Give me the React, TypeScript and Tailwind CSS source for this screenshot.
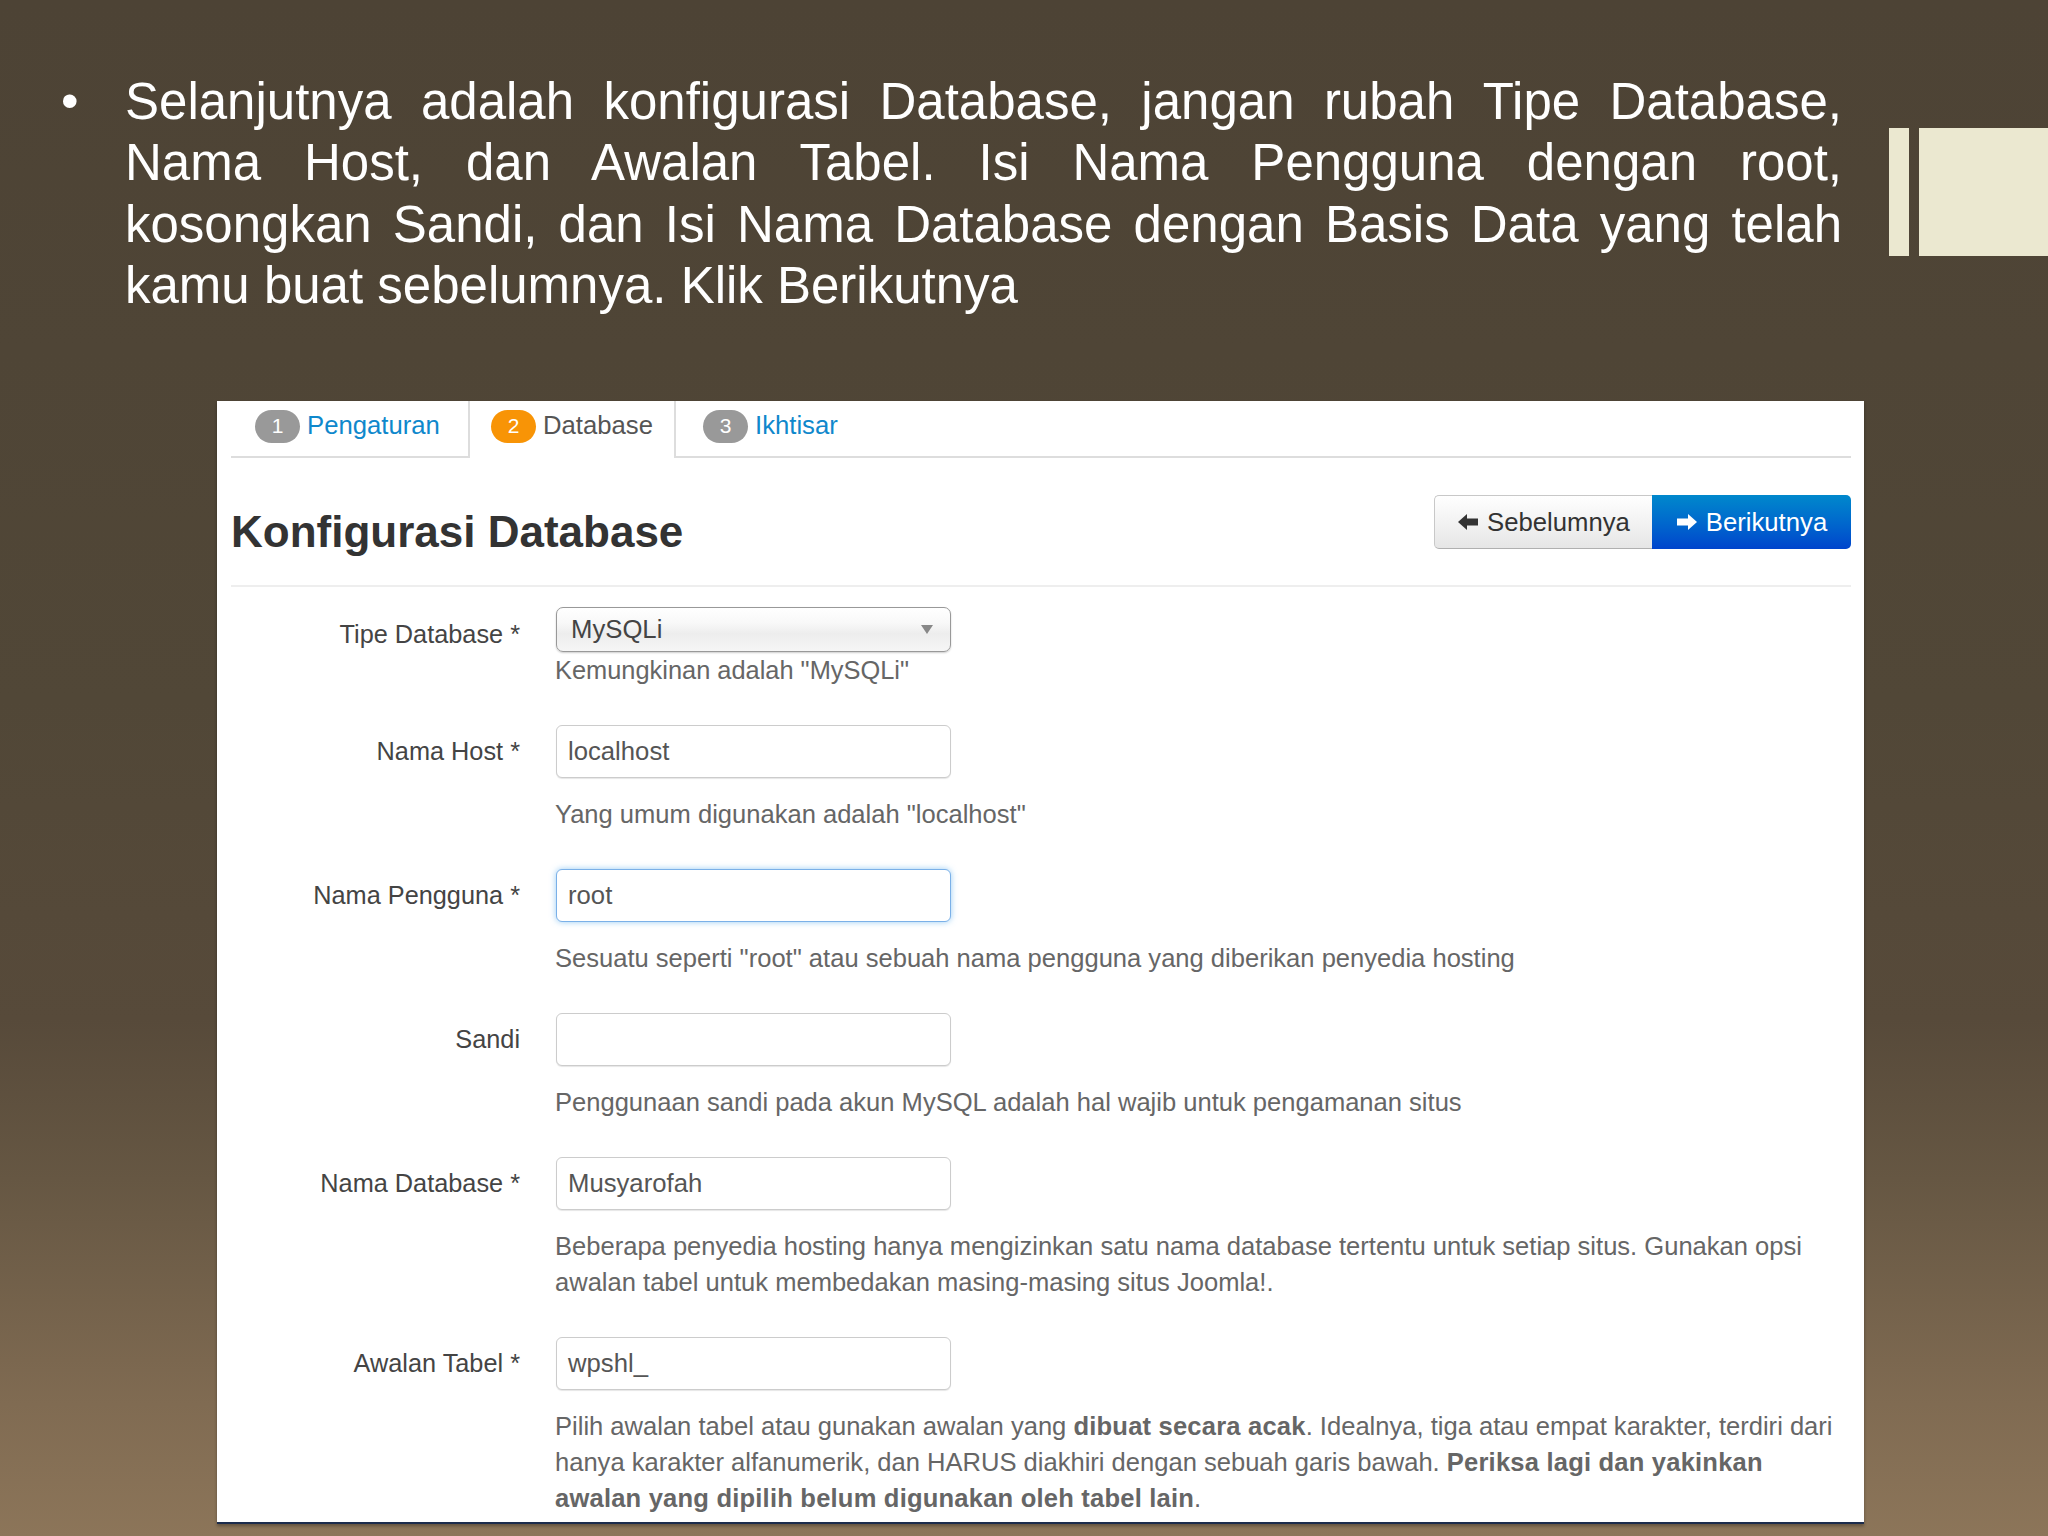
const Left = () => (
  <svg viewBox="0 0 20 16" className="w-[22px] h-[16px] mr-[8px] fill-[#333]"><path d="M0 8 L9 0 V4.5 H20 V11.5 H9 V16 Z" /></svg>
);
const Right = () => (
  <svg viewBox="0 0 20 16" className="w-[22px] h-[16px] mr-[8px] fill-white"><path d="M20 8 L11 0 V4.5 H0 V11.5 H11 V16 Z" /></svg>
);

function Badge({ n, orange }: { n: number; orange?: boolean }) {
  return (
    <span className={`w-[45px] h-[33px] rounded-full flex items-center justify-center text-white text-[21px] mr-[7px] ${orange ? "bg-[#f89406]" : "bg-[#999999]"}`}>
      {n}
    </span>
  );
}

function Field({ label, value, focus, help }: { label: string; value: string; focus?: boolean; help: React.ReactNode }) {
  return (
    <div className="flex mb-[37px]">
      <div className="w-[289px] pt-[11px] text-right text-[25.3px] text-[#444] leading-[30px] shrink-0">{label}</div>
      <div className="ml-[36px] flex-1">
        <div className={`w-[395px] h-[53px] rounded-[6px] border bg-white px-[11px] flex items-center text-[#555] ${focus ? "border-[#7ab0e8] shadow-[0_0_6px_rgba(82,168,236,0.6)]" : "border-[#cccccc] shadow-[0_1px_1px_rgba(0,0,0,0.1)]"}`}>
          {value}
        </div>
        <div className="mt-[18px] -ml-px leading-[36px] text-[25.55px] text-[#666]">{help}</div>
      </div>
    </div>
  );
}

export default function App() {
  return (
    <div
      className="w-[2048px] h-[1536px] overflow-hidden flex flex-col bg-[linear-gradient(180deg,#4d4335_0%,#514737_45.6%,#574a3a_66.4%,#665743_76.8%,#806b52_91.4%,#8c7559_100%)]"
      style={{ fontFamily: '"Liberation Sans", Arial, sans-serif' }}
    >
      <div className="flex items-start pl-[61px] pt-[71px] h-[401px] shrink-0">
        <div className="w-[64px] text-white text-[50px] leading-[61.4px]">•</div>
        <div className="w-[1717px] text-white text-[51px] leading-[61.4px]">
          <div className="[text-align:justify] [text-align-last:justify]">Selanjutnya adalah konfigurasi Database, jangan rubah Tipe Database,</div>
          <div className="[text-align:justify] [text-align-last:justify]">Nama Host, dan Awalan Tabel. Isi Nama Pengguna dengan root,</div>
          <div className="[text-align:justify] [text-align-last:justify]">kosongkan Sandi, dan Isi Nama Database dengan Basis Data yang telah</div>
          <div>kamu buat sebelumnya. Klik Berikutnya</div>
        </div>
        <div className="flex ml-[47px] mt-[57px]">
          <div className="w-[20px] h-[128px] bg-[#ebe8d0]" />
          <div className="w-[129px] h-[128px] ml-[10px] bg-[#ebe8d0]" />
        </div>
      </div>

      <div className="ml-[217px] w-[1647px] h-[1123px] shrink-0 bg-white border-b-2 border-[#1c2c4c] px-[14px] text-[25.7px] overflow-hidden shadow-[0_2px_3px_rgba(0,0,0,0.3)]">
        <div className="w-[1620px] flex h-[57px] border-b-2 border-[#dddddd]">
          <div className="w-[237px] pl-[24px] h-[50px] flex items-center">
            <Badge n={1} />
            <span className="text-[#0f88cc] -mt-[2px]">Pengaturan</span>
          </div>
          <div className="w-[208px] h-[57px] pl-[21px] pb-[7px] flex items-center bg-white border-x-2 border-[#dddddd]">
            <Badge n={2} orange />
            <span className="text-[#555] -mt-[2px]">Database</span>
          </div>
          <div className="pl-[27px] h-[50px] flex items-center">
            <Badge n={3} />
            <span className="text-[#0f88cc] -mt-[2px]">Ikhtisar</span>
          </div>
        </div>

        <div className="w-[1620px] h-[129px] flex items-start justify-between border-b-2 border-[#eeeeee]">
          <h1 className="mt-[44px] text-[44px] leading-[60px] font-bold text-[#333]">Konfigurasi Database</h1>
          <div className="flex mt-[37px] h-[54px]">
            <div className="w-[218px] flex items-center justify-center rounded-l-[5px] border border-[#c8c8c8] border-b-[#b0b0b0] border-r-0 bg-gradient-to-b from-white to-[#e6e6e6] text-[#333]">
              <Left />Sebelumnya
            </div>
            <div className="w-[199px] flex items-center justify-center rounded-r-[5px] bg-gradient-to-b from-[#0088cc] to-[#0044cc] text-white">
              <Right />Berikutnya
            </div>
          </div>
        </div>

        <div className="w-[1620px] pt-[20px]">
          <div className="flex h-[118px]">
            <div className="w-[289px] pt-[9px] text-right text-[25.3px] text-[#444] leading-[36px] shrink-0">Tipe Database *</div>
            <div className="ml-[36px]">
              <div className="w-[395px] h-[45px] rounded-[7px] border border-[#999999] shadow-[0_1px_2px_rgba(0,0,0,0.2)] bg-[linear-gradient(180deg,#ffffff_0%,#f8f8f8_35%,#ededed_60%,#f6f6f6_100%)] pl-[14px] pr-[17px] flex items-center justify-between text-[#444]">
                MySQLi
                <span className="w-0 h-0 border-x-[6px] border-x-transparent border-t-[9px] border-t-[#888]" />
              </div>
              <div className="-ml-px leading-[36px] text-[25.4px] text-[#666]">Kemungkinan adalah "MySQLi"</div>
            </div>
          </div>
          <Field label="Nama Host *" value="localhost" help={'Yang umum digunakan adalah "localhost"'} />
          <Field focus label="Nama Pengguna *" value="root" help={'Sesuatu seperti "root" atau sebuah nama pengguna yang diberikan penyedia hosting'} />
          <Field label="Sandi" value="" help="Penggunaan sandi pada akun MySQL adalah hal wajib untuk pengamanan situs" />
          <Field label="Nama Database *" value="Musyarofah" help="Beberapa penyedia hosting hanya mengizinkan satu nama database tertentu untuk setiap situs. Gunakan opsi awalan tabel untuk membedakan masing-masing situs Joomla!." />
          <Field
            label="Awalan Tabel *"
            value="wpshl_"
            help={
              <>
                Pilih awalan tabel atau gunakan awalan yang <b className="tracking-[0.2px]">dibuat secara acak</b>. Idealnya, tiga atau empat karakter, terdiri dari hanya karakter alfanumerik, dan HARUS diakhiri dengan sebuah garis bawah. <b className="tracking-[0.2px]">Periksa lagi dan yakinkan awalan yang dipilih belum digunakan oleh tabel lain</b>.
              </>
            }
          />
        </div>
      </div>
    </div>
  );
}
